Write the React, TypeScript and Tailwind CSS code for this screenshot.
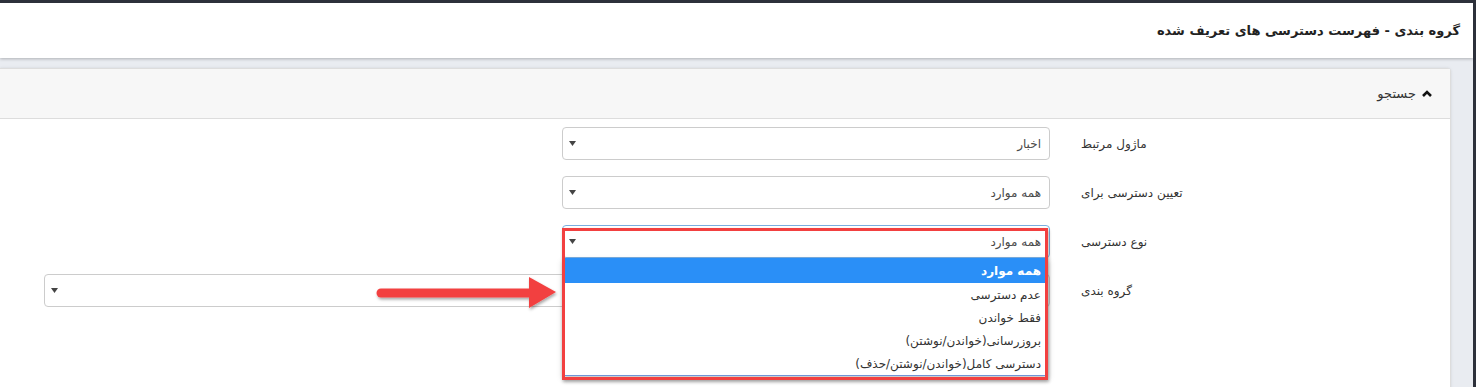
const font = { fontFamily: '"DejaVu Sans", "Noto Sans", sans-serif' };

function Caret() {
  return (
    <svg width="7" height="5" viewBox="0 0 7 5" className="shrink-0">
      <path d="M0 0 L7 0 L3.5 5 Z" fill="#444" />
    </svg>
  );
}

function SelectBox({ value, width, focused }: { value: string; width: string; focused?: boolean }) {
  return (
    <div
      className={`${width} h-[33px] bg-white rounded-[4px] border flex items-center justify-between pr-[8px] pl-[6px] ${
        focused ? "border-[#7aaee0]" : "border-[#cccccc]"
      }`}
    >
      <span className="text-[12px] text-[#4a4a4a]">{value}</span>
      <Caret />
    </div>
  );
}

const options = [
  "عدم دسترسی",
  "فقط خواندن",
  "بروزرسانی(خواندن/نوشتن)",
  "دسترسی کامل(خواندن/نوشتن/حذف)",
];

function Row({ label, children }: { label: string; children: React.ReactNode }) {
  return (
    <div className="flex items-center h-[33px]">
      <div className="w-[400px] shrink-0 pl-[31px] text-left text-[12px] text-[#333] whitespace-nowrap">{label}</div>
      {children}
    </div>
  );
}

export default function App() {
  return (
    <div
      dir="rtl"
      style={font}
      className="relative w-[1476px] h-[387px] overflow-hidden bg-[#e9ecf1] border-t-[3px] border-t-[#2d313b] border-r-[3px] border-r-[#2d313b]"
    >
      {/* page header */}
      <div className="h-[55px] bg-white shadow-[0_1px_3px_rgba(0,0,0,0.25)] flex items-center pr-[13px] relative z-10">
        <h1 className="text-[13px] font-bold text-[#222]">گروه بندی - فهرست دسترسی های تعریف شده</h1>
      </div>

      {/* search panel */}
      <div className="mt-[10px] mr-[22px] h-[330px] bg-white border border-l-0 border-[#dddddd] rounded-tr-[4px] shadow-[0_0_3px_rgba(0,0,0,0.1)]">
        <div className="h-[50px] bg-[#f7f7f7] border-b border-[#dddddd] flex items-center gap-[6px] pr-[18px]">
          <svg width="10" height="7" viewBox="0 0 10 7">
            <path d="M1 6 L5 2 L9 6" stroke="#111" strokeWidth="2.6" fill="none" />
          </svg>
          <span className="text-[13px] text-[#333]">جستجو</span>
        </div>

        <div className="pt-[8px] flex flex-col gap-[16px]">
          <Row label="ماژول مرتبط">
            <SelectBox value="اخبار" width="w-[488px]" />
          </Row>
          <Row label="تعیین دسترسی برای">
            <SelectBox value="همه موارد" width="w-[488px]" />
          </Row>
          <Row label="نوع دسترسی">
            <div className="relative">
              <SelectBox value="همه موارد" width="w-[488px]" focused />
              {/* open list */}
              <div className="absolute top-[33px] right-[2px] w-[485px] bg-white border-b border-[#6f95d8] shadow-[0_3px_6px_rgba(0,0,0,0.25)] z-20 text-[12px]">
                <div className="h-[25px] bg-[#2a8ff7] text-white font-bold flex items-center pr-[7px]">همه موارد</div>
                {options.map((o) => (
                  <div key={o} className="h-[23px] flex items-center pr-[7px] text-[#333]">
                    {o}
                  </div>
                ))}
              </div>
              {/* annotation frame */}
              <div className="absolute top-[3px] right-[2px] w-[486px] h-[152px] border-[3px] border-[#f24040] z-30 pointer-events-none shadow-[1px_2px_3px_rgba(0,0,0,0.3)]" />
            </div>
          </Row>
          <Row label="گروه بندی">
            <SelectBox value="" width="w-[1006px]" />
          </Row>
        </div>
      </div>

      {/* annotation arrow */}
      <svg className="absolute left-[372px] top-[270px] z-30" width="190" height="40" viewBox="0 0 190 40">
        <defs>
          <filter id="sh" x="-10%" y="-30%" width="120%" height="160%">
            <feDropShadow dx="1" dy="2" stdDeviation="1.5" floodColor="#000" floodOpacity="0.35" />
          </filter>
        </defs>
        <g filter="url(#sh)">
          <line x1="9" y1="20" x2="160" y2="20" stroke="#f24040" strokeWidth="9" strokeLinecap="round" />
          <path d="M157 4 L184 19 L157 35 Z" fill="#f24040" />
        </g>
      </svg>
    </div>
  );
}
